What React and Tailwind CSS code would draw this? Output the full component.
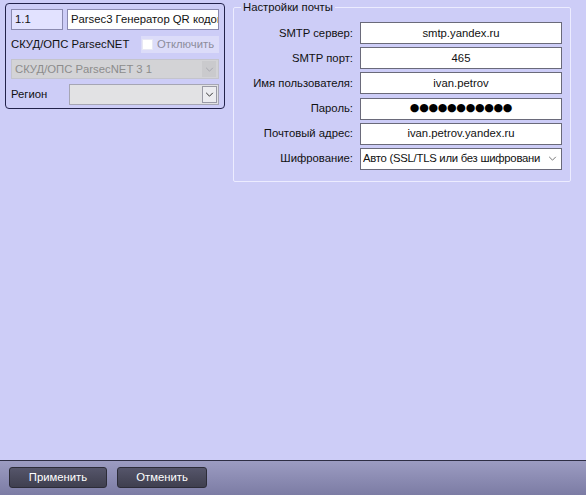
import React from "react";

const Chevron = ({ color = "#555", size = 9 }) => (
  <svg width={size} height={Math.round(size * 0.6)} viewBox="0 0 10 6" fill="none">
    <path d="M1 1 L5 5 L9 1" stroke={color} strokeWidth="1.2" />
  </svg>
);

const Row = ({ label, children }) => (
  <div className="flex items-center h-[22px]">
    <div className="w-[126px] text-right pr-[7px] text-[#111] whitespace-nowrap">{label}</div>
    {children}
  </div>
);

const Field = ({ children, className = "" }) => (
  <div
    className={
      "w-[202px] h-[22px] bg-white border border-[#6a6a7a] flex items-center justify-center text-[#111] whitespace-nowrap overflow-hidden " +
      className
    }
  >
    {children}
  </div>
);

export default function App() {
  return (
    <div
      className="w-[586px] h-[495px] flex flex-col bg-[#cdcdf7] text-[11.3px] overflow-hidden"
      style={{ fontFamily: '"Liberation Sans", Arial, sans-serif' }}
    >
      <div className="flex-1 flex items-start">
        {/* Left panel */}
        <div className="ml-[5px] mt-[3px] w-[220px] h-[106px] border-[1.5px] border-[#22224a] rounded-[4px] flex flex-col px-[5px] pt-[5px] gap-[5px]">
          <div className="flex gap-[4px] h-[21px]">
            <div className="w-[52px] h-[21px] bg-[#e2e2ff] border border-[#8a8ab0] flex items-center px-[3px] text-[#111]">
              1.1
            </div>
            <div className="flex-1 h-[21px] bg-white border border-[#8a8ab0] flex items-center px-[3px] text-[#111] whitespace-nowrap overflow-hidden">
              Parsec3 Генератор QR кодов
            </div>
          </div>
          <div className="flex items-center h-[19px]">
            <div className="flex-1 text-[#111] whitespace-nowrap">СКУД/ОПС ParsecNET</div>
            <div className="w-[78px] h-[17px] bg-[#dcdcf9] flex items-center gap-[4px] pl-[1px]">
              <div className="w-[11px] h-[11px] bg-white border border-[#e8e8f4]" />
              <span className="text-[#8c8c9c]">Отключить</span>
            </div>
          </div>
          <div className="h-[20px] bg-[#d3d3d6] border border-[#c4c4cc] flex items-center pl-[3px] pr-[2px]">
            <span className="flex-1 text-[#8c8c8c] whitespace-nowrap">СКУД/ОПС ParsecNET 3 1</span>
            <div className="w-[14px] h-[16px] bg-[#cacacd] flex items-center justify-center">
              <Chevron color="#a8a8b0" />
            </div>
          </div>
          <div className="flex items-center h-[21px]">
            <div className="w-[58px] text-[#111]">Регион</div>
            <div className="flex-1 h-[21px] bg-[#e2e2e4] border border-[#a6a6b4] flex items-center justify-end pr-[1px]">
              <div className="w-[15px] h-[17px] bg-[#ececf0] border border-[#9a9aa6] flex items-center justify-center">
                <Chevron color="#333" />
              </div>
            </div>
          </div>
        </div>

        {/* Right group box */}
        <fieldset className="ml-[8px] mt-[1px] w-[337px] h-[181px] border border-[#ececff] rounded-[2px] pl-[0px] pr-[8px] pt-[6px] flex flex-col">
          <legend className="ml-[7px] px-[2px] text-[#111] leading-[13px]">Настройки почты</legend>
          <div className="flex flex-col gap-[3.2px] mt-[2px]">
            <Row label="SMTP сервер:">
              <Field>smtp.yandex.ru</Field>
            </Row>
            <Row label="SMTP порт:">
              <Field>465</Field>
            </Row>
            <Row label="Имя пользователя:">
              <Field>ivan.petrov</Field>
            </Row>
            <Row label="Пароль:">
              <Field>
                <span className="text-[11px] tracking-[-0.3px] text-black" style={{ fontFamily: '"DejaVu Sans", sans-serif' }}>
                  ●●●●●●●●●●●
                </span>
              </Field>
            </Row>
            <Row label="Почтовый адрес:">
              <Field>ivan.petrov.yandex.ru</Field>
            </Row>
            <Row label="Шифрование:">
              <Field className="!justify-start pl-[2px] pr-[4px]">
                <span className="flex-1 overflow-hidden whitespace-nowrap tracking-[-0.25px]">Авто (SSL/TLS или без шифровани</span>
                <span className="ml-[3px]">
                  <Chevron color="#777" />
                </span>
              </Field>
            </Row>
          </div>
        </fieldset>
      </div>

      {/* Bottom bar */}
      <div className="h-[35px] border-t border-[#2e2e44] bg-gradient-to-b from-[#9c9cc2] to-[#7c7ca4] flex items-center gap-[10px] pl-[9px] pb-[1px]">
        <button className="w-[98px] h-[21px] rounded-[3px] border border-[#2c2c38] bg-gradient-to-b from-[#55556a] to-[#3f3f4f] text-white text-[11.3px]">
          Применить
        </button>
        <button className="w-[90px] h-[21px] rounded-[3px] border border-[#2c2c38] bg-gradient-to-b from-[#55556a] to-[#3f3f4f] text-white text-[11.3px]">
          Отменить
        </button>
      </div>
    </div>
  );
}
